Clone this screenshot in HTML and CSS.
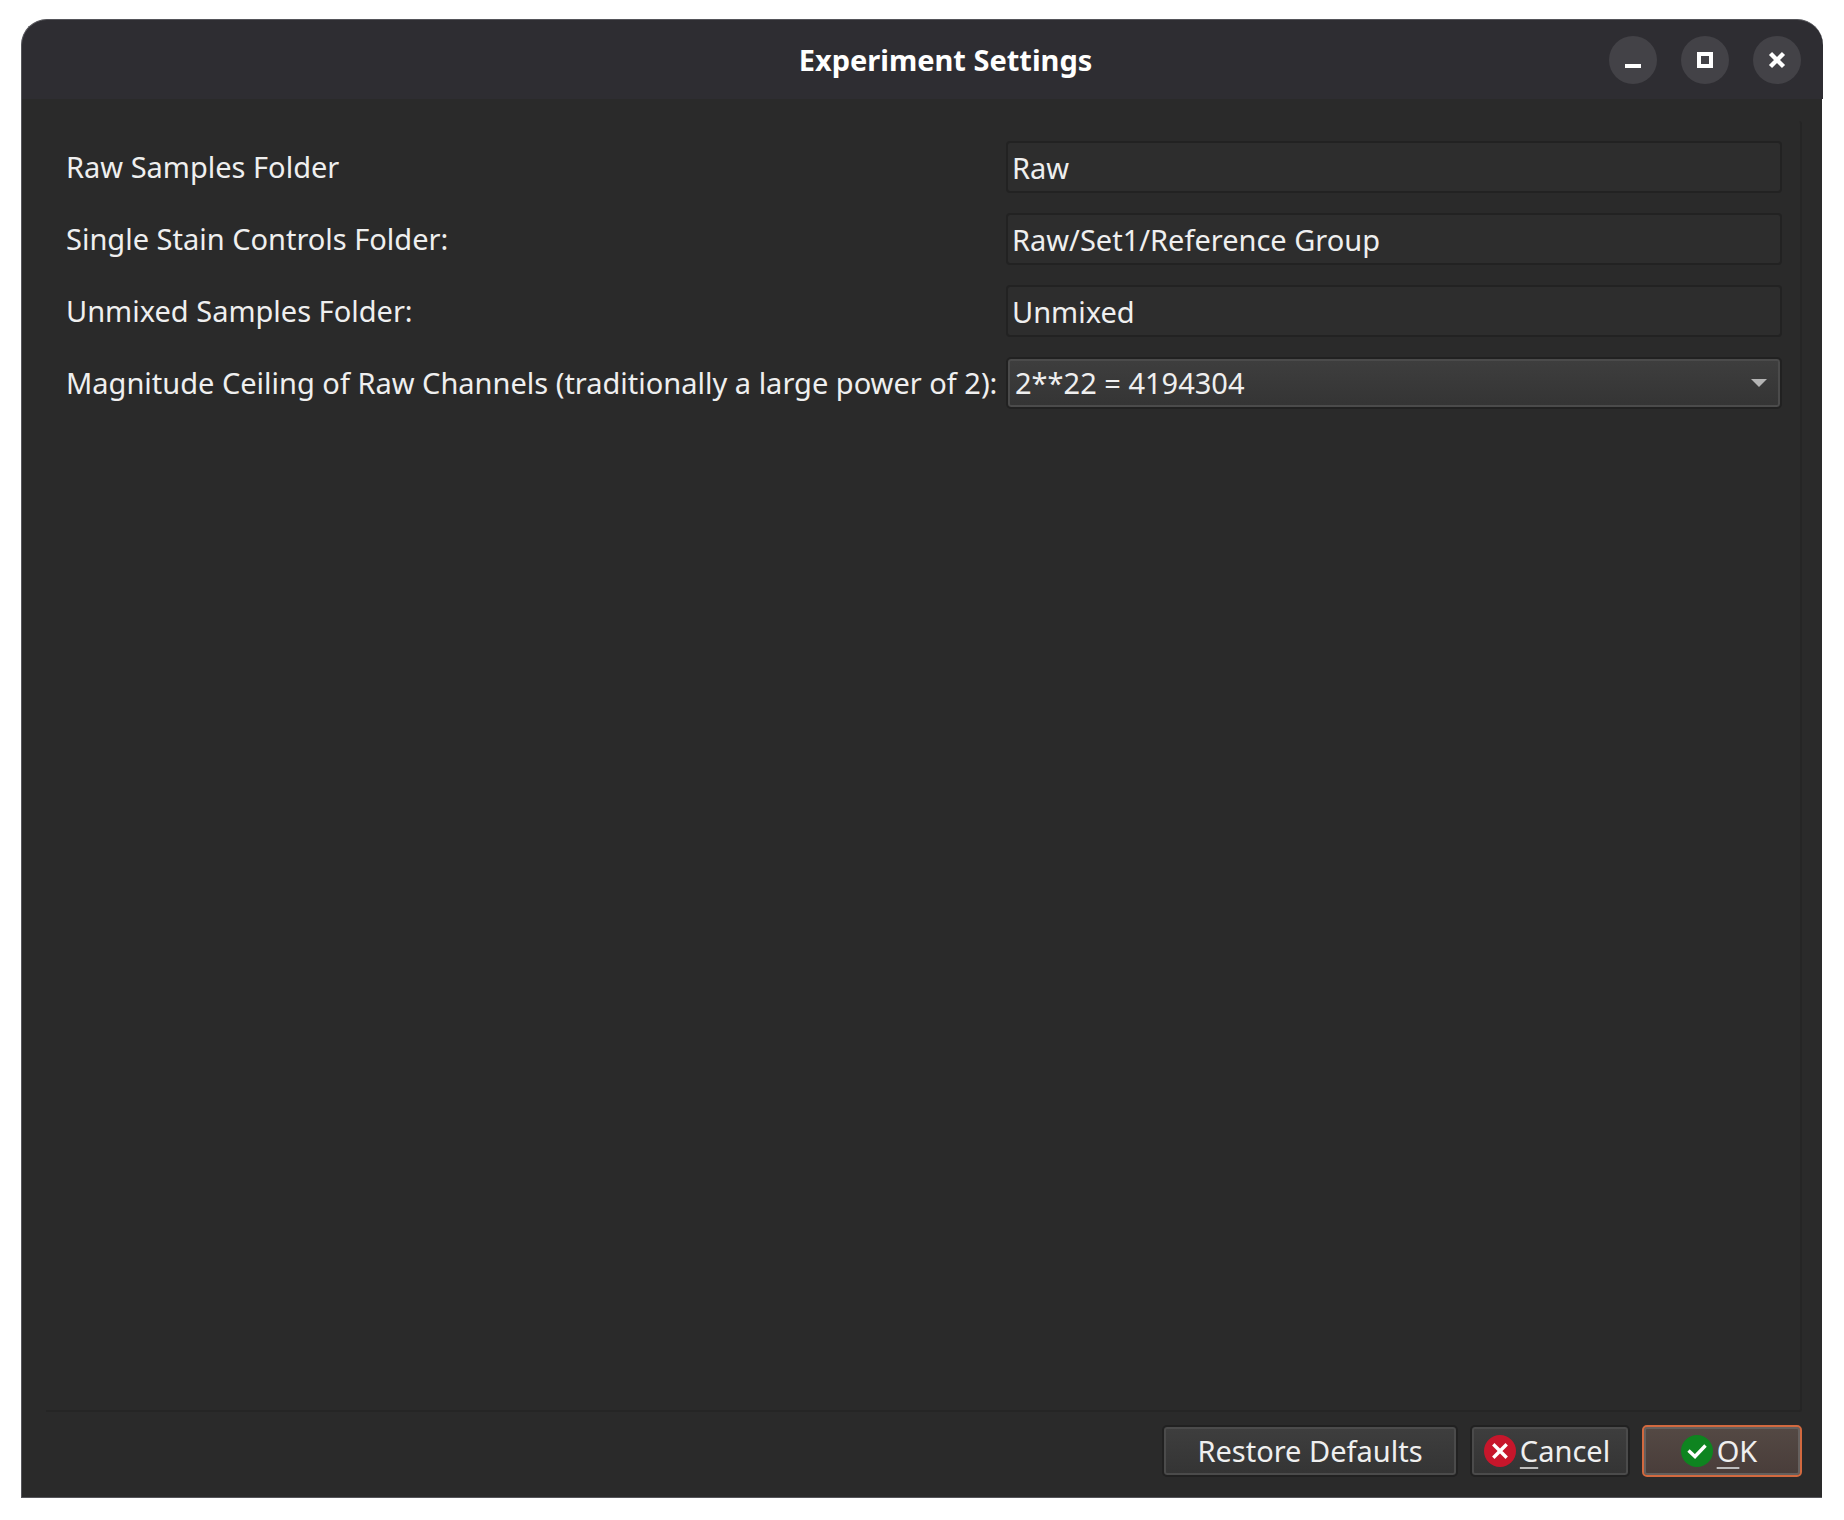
FILE: index.html
```html
<!DOCTYPE html>
<html lang="en">
<head>
<meta charset="utf-8">
<title>Experiment Settings</title>
<link rel="stylesheet" href="styles.css">
</head>
<body>

<div class="window">
    <header class="titlebar">
        <h1>Experiment Settings</h1>
        <div class="window-buttons">
            <button type="button" aria-label="Minimize">
                <svg width="48" height="48" viewBox="0 0 48 48"><path d="M16 28h16v4H16z" fill="#fff"/></svg>
            </button>
            <button type="button" aria-label="Maximize">
                <svg width="48" height="48" viewBox="0 0 48 48"><path d="M18 18h12v12H18z" fill="none" stroke="#fff" stroke-width="4"/></svg>
            </button>
            <button type="button" aria-label="Close">
                <svg width="48" height="48" viewBox="0 0 48 48"><path d="M17.5 17.5l13 13M30.5 17.5l-13 13" stroke="#fff" stroke-width="4.4"/></svg>
            </button>
        </div>
    </header>

    <form class="dialog">
        <div class="panel">
            <div class="fields">
                <label for="raw">Raw Samples Folder</label>
                <input type="text" id="raw" value="Raw">

                <label for="controls">Single Stain Controls Folder:</label>
                <input type="text" id="controls" value="Raw/Set1/Reference Group">

                <label for="unmixed">Unmixed Samples Folder:</label>
                <input type="text" id="unmixed" value="Unmixed">

                <label for="ceiling">Magnitude Ceiling of Raw Channels (traditionally a large power of 2):</label>
                <div class="dropdown">
                    <select id="ceiling">
                        <option>2**22 = 4194304</option>
                    </select>
                    <svg class="arrow" width="16" height="8" viewBox="0 0 16 8"><path d="M0 0h16L8 8z" fill="#b4b4b4"/></svg>
                </div>
            </div>
        </div>

        <div class="actions">
            <button type="button" class="btn restore">Restore Defaults</button>
            <button type="button" class="btn cancel">
                <svg width="32" height="32" viewBox="0 0 32 32"><circle cx="16" cy="16" r="16" fill="#c7162b"/><path d="M10.500 10.500l11 11M21.500 10.500l-11 11" stroke="#fff" stroke-width="3.400" stroke-linecap="square"/></svg>
                <span><u>C</u>ancel</span>
            </button>
            <button type="submit" class="btn ok">
                <svg width="32" height="32" viewBox="0 0 32 32"><circle cx="16" cy="16" r="16" fill="#0e8420"/><path d="M7.500 15.500l6.500 6L24.500 10.500" fill="none" stroke="#fff" stroke-width="3.400"/></svg>
                <span><u>O</u>K</span>
            </button>
        </div>
    </form>
</div>

</body>
</html>
```

FILE: styles.css
```css
* {
    box-sizing: border-box;
}

body {
    margin: 0;
    background: #fff;
    color: #efefef;
    font-family: "Noto Sans", sans-serif;
    font-size: 29px;
    line-height: 40px;
}

.window {
    display: flex;
    flex-direction: column;
    min-height: 100vh;
    padding: 19px 21px 22px;
}

.titlebar {
    display: grid;
    grid-template-columns: 1fr auto 1fr;
    align-items: center;
    height: 80px;
    padding: 0 22px 0 68px;
    background: #2e2d32;
    border: 1px solid #55555a;
    border-width: 1px 0 0 1px;
    border-radius: 26px 26px 0 0;
}

.titlebar h1 {
    grid-column: 2;
    margin: 0;
    color: #fff;
    font-size: 29px;
    font-weight: bold;
}

.window-buttons {
    display: flex;
    justify-content: flex-end;
    gap: 24px;
}

.window-buttons button {
    width: 48px;
    height: 48px;
    padding: 0;
    border: 0;
    border-radius: 50%;
    background: #434247;
}

.window-buttons svg {
    display: block;
}

.dialog {
    flex: 1;
    display: flex;
    flex-direction: column;
    margin-right: 1px;
    padding: 22px 20px 20px 24px;
    background: #2a2a2a;
    border-left: 1px solid #55555a;
    border-bottom: 1px solid #55555a;
}

.panel {
    flex: 1;
    padding: 20px 18px 20px 20px;
    border: 2px solid #252525;
    border-width: 0 2px 2px 0;
    border-radius: 0 3px 3px 0;
}

.fields {
    display: grid;
    grid-template-columns: 235fr 194fr;
    row-gap: 20px;
    align-items: center;
}

.fields label {
    white-space: nowrap;
}

.fields input,
.fields select {
    display: block;
    width: 100%;
    height: 52px;
    color: #efefef;
    font: inherit;
}

.fields input {
    padding: 0 4px;
    background: #2d2d2d;
    border: 2px solid #222;
    border-radius: 4px;
}

.dropdown {
    position: relative;
}

.fields select {
    appearance: none;
    padding: 0 36px 0 7px;
    background: linear-gradient(#3e3e3e, #343434);
    border: 2px solid #212121;
    border-radius: 5px;
    box-shadow: inset 0 0 0 2px #4b4b4b;
}

.arrow {
    position: absolute;
    right: 15px;
    top: 22px;
    pointer-events: none;
}

.actions {
    display: flex;
    justify-content: flex-end;
    gap: 12px;
    padding-top: 13px;
}

.btn {
    display: flex;
    align-items: center;
    justify-content: center;
    gap: 4px;
    height: 52px;
    padding: 0;
    color: #efefef;
    font: inherit;
    background: linear-gradient(#3e3e3e, #343434);
    border: 2px solid #212121;
    border-radius: 5px;
    box-shadow: inset 0 0 0 2px #4b4b4b;
}

.restore {
    width: 296px;
}

.cancel,
.ok {
    width: 160px;
    padding-right: 6px;
}

.ok {
    background: linear-gradient(#544944, #493d3a);
    border-color: #d2693f;
    box-shadow: inset 0 0 0 2px #65605e;
}

u {
    text-decoration-color: #bdbdbd;
    text-decoration-thickness: 2px;
    text-underline-offset: 5px;
}
```
